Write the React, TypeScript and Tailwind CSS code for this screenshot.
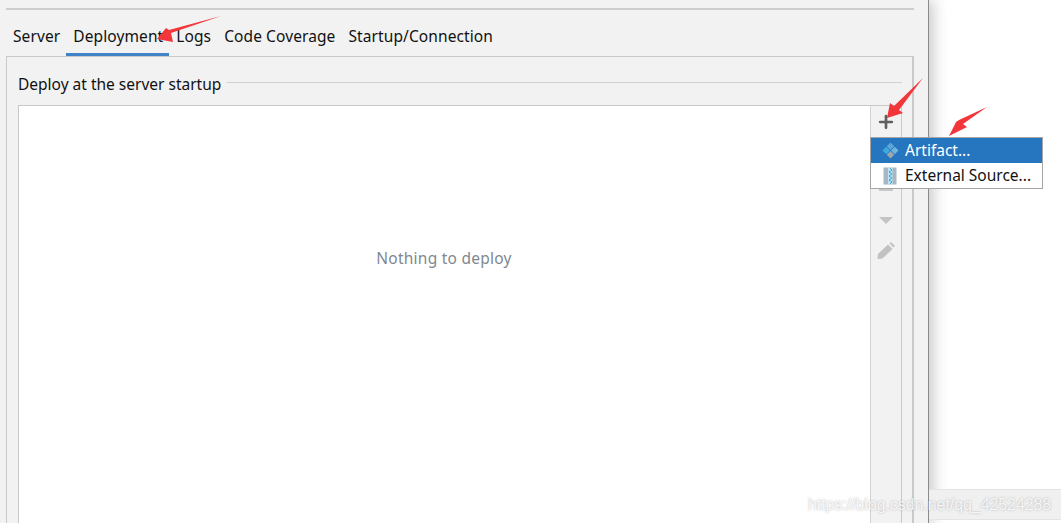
import { Plus } from 'lucide-react';

const tabs = ['Server', 'Deployment', 'Logs', 'Code Coverage', 'Startup/Connection'];

function Tab({ label }: { label: string }) {
  const active = label === 'Deployment';
  return (
    <div
      className={`flex h-[31px] items-start pl-[7px] pr-[6px] pt-[1px] tracking-[0.1px] ${
        active ? 'w-[103px] border-b-[3px] border-[#4083c9]' : ''
      }`}
    >
      {label}
    </div>
  );
}

function ArtifactIcon() {
  return (
    <svg width="17" height="17" viewBox="0 0 16 16">
      <path d="M8 0.5 L11.5 4 L8 7.5 L4.5 4 Z" fill="#5aa9d6" />
      <path d="M4 4.5 L7.5 8 L4 11.5 L0.5 8 Z" fill="#3fa9e0" />
      <path d="M12 4.5 L15.5 8 L12 11.5 L8.5 8 Z" fill="#6fb5dc" />
      <path d="M8 8.5 L11.5 12 L8 15.5 L4.5 12 Z" fill="#9aa7b0" />
    </svg>
  );
}

function ExternalIcon() {
  return (
    <svg width="14" height="18" viewBox="0 0 14 18">
      <rect x="0.5" y="0.5" width="13" height="17" fill="#a9b7c2" />
      <rect x="5" y="0.5" width="4.5" height="17" fill="#bfe3f3" />
      <path d="M7 1 L9 3 L6 5 L9 7 L6 9 L9 11 L6 13 L9 15 L7 17" stroke="#35a4dc" strokeWidth="1" fill="none" />
    </svg>
  );
}

function PencilIcon() {
  return (
    <svg width="18" height="17" viewBox="0 0 18 17">
      <path d="M0.5 17 L1 12 L11 2.5 L15.5 7 L5.5 16.5 Z" fill="#c2c2c2" />
      <path d="M12.5 1.5 L14 0 L18 4 L16.5 5.5 Z" fill="#c2c2c2" />
    </svg>
  );
}

function AddMenu() {
  return (
    <div className="absolute left-[870px] top-[137px] w-[173px] border border-[#a5a5a5] bg-white text-[#111]">
      <div className="flex h-[25px] items-center gap-[6px] bg-[#2675bf] pl-[11px] text-white">
        <ArtifactIcon />
        <span>Artifact...</span>
      </div>
      <div className="flex h-[25px] items-center gap-[8px] pl-[12px]">
        <ExternalIcon />
        <span>External Source...</span>
      </div>
    </div>
  );
}

function Arrows() {
  return (
    <svg className="pointer-events-none absolute left-0 top-0" width="1061" height="523" viewBox="0 0 1061 523">
      <path d="M221 16 L171 33 L173 42 L157 39 L166 28 L169 30 Z" fill="#f2363a" />
      <path d="M923 78 L899 110 L903 113 L887 118 L890 103 L894 106 Z" fill="#f2363a" />
      <path d="M987 107 L963 124 L967 127 L949 136 L956 122 L959 120 Z" fill="#f2363a" />
    </svg>
  );
}

export default function App() {
  return (
    <div className="relative flex h-[523px] w-[1061px] overflow-hidden bg-white font-['Noto_Sans',sans-serif] text-[15.5px] leading-[21px] text-[#111]">
      <div className="flex h-full w-[929px] shrink-0 flex-col border-r border-[#8a8a8a] bg-[#f2f2f2] pl-[6px] pr-[14px] pt-[8px] shadow-[4px_0_14px_rgba(0,0,0,0.22)]">
        <div className="h-[2px] bg-[#cdcdcd]" />
        <div className="flex h-[46px] items-end">
          {tabs.map((tab) => (
            <Tab key={tab} label={tab} />
          ))}
        </div>
        <div className="flex min-h-0 flex-1 flex-col border border-b-0 border-r-2 border-[#c9c9c9] pl-[11px] pr-[10px] pt-[15px]">
          <div className="flex h-[24px] items-center gap-[6px]">
            <span>Deploy at the server startup</span>
            <div className="mb-[3px] h-px flex-1 bg-[#d0d0d0]" />
          </div>
          <div className="mt-[9px] flex min-h-0 flex-1 border-l border-t border-r border-[#c9c9c9]">
            <div className="flex flex-1 justify-center bg-white pr-[1px] pt-[142px] tracking-[0.25px] text-[#7f8890]">
              <span>Nothing to deploy</span>
            </div>
            <div className="flex w-[31px] shrink-0 flex-col items-center border-l border-[#d4d4d4] pt-[6px]">
              <Plus size={20} strokeWidth={3.2} className="text-[#5f5f5f]" />
              <div className="mt-[56px] h-[3px] w-[14px] bg-[#c8c8c8]" />
              <div className="mt-[26px] h-0 w-0 border-x-[7px] border-t-[7px] border-x-transparent border-t-[#c4c4c4]" />
              <div className="mt-[18px] leading-none">
                <PencilIcon />
              </div>
            </div>
          </div>
        </div>
      </div>
      <div className="flex flex-1 flex-col justify-end pb-[3px]">
        <div className="h-[31px] border-y border-[#e4e4e4] bg-[#f0f0f0]" />
      </div>
      <AddMenu />
      <Arrows />
      <div className="absolute left-[808px] top-[494px] font-['Liberation_Sans',sans-serif] text-[15.85px] text-white/85 [text-shadow:0_0_2px_rgba(110,110,110,0.55)]">
        https://blog.csdn.net/qq_42524288
      </div>
    </div>
  );
}
